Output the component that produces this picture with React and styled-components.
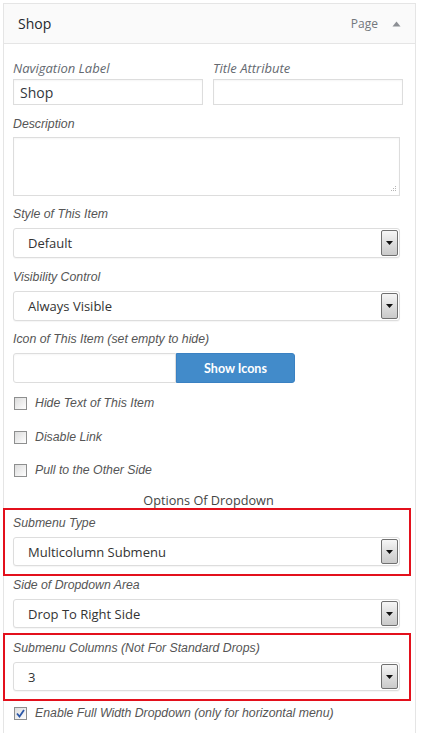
import React from 'react';
import styled, { createGlobalStyle } from 'styled-components';

const GlobalStyle = createGlobalStyle`
  html, body {
    margin: 0;
    padding: 0;
    background: #fff;
  }
  body {
    font-family: "Open Sans", "Liberation Sans", sans-serif;
    color: #333;
  }
`;

const Panel = styled.div`
  margin: 3px 0 0 3px;
  width: 411px;
  min-height: 730px;
  border: 1px solid #e5e5e5;
  border-bottom: none;
  background: #fff;
`;

const Header = styled.div`
  height: 39px;
  padding: 0 14px 0 14px;
  display: flex;
  align-items: center;
  background: #fafafa;
  border-bottom: 1px solid #e5e5e5;
`;

const Title = styled.div`
  flex: 1;
  font-size: 14px;
  font-weight: 400;
  color: #23282d;
`;

const ItemType = styled.span`
  font-size: 12px;
  color: #72777c;
  margin-right: 14px;
`;

const Toggle = () => (
  <svg width="9" height="6" viewBox="0 0 9 6">
    <path d="M0.5 5.5 L4.5 0.5 L8.5 5.5 Z" fill="#8c8f94" />
  </svg>
);

const Body = styled.div`
  padding: 15px 11px 0 9px;
  display: flex;
  flex-direction: column;
`;

const Row = styled.div`
  display: flex;
  gap: 10px;
`;

const Field = styled.div`
  display: flex;
  flex-direction: column;
  margin-top: ${p => p.$top || 0}px;
  width: ${p => (p.$width ? `${p.$width}px` : 'auto')};
`;

const Label = styled.label`
  display: block;
  height: 18px;
  line-height: 18px;
  font-style: italic;
  font-size: ${p => (p.$wp ? 13 : 12.3)}px;
  color: ${p => (p.$wp ? '#646970' : '#555')};
  font-family: ${p =>
    p.$wp ? '"Open Sans", sans-serif' : '"Liberation Sans", Arial, sans-serif'};
  margin-bottom: ${p => p.$gap || 5}px;
`;

const TextInput = styled.input`
  box-sizing: border-box;
  width: ${p => p.$width}px;
  height: ${p => p.$height || 26}px;
  border: 1px solid #ddd;
  border-radius: ${p => (p.$flat ? '3px 0 0 3px' : '0')};
  padding: 0 6px;
  font-family: "Open Sans", sans-serif;
  font-size: 14px;
  color: #32373c;
  box-shadow: inset 0 1px 2px rgba(0, 0, 0, 0.04);
  outline: none;
`;

const AreaWrap = styled.div`
  position: relative;
  width: 387px;
  height: 59px;
`;

const TextArea = styled.textarea`
  box-sizing: border-box;
  width: 387px;
  height: 59px;
  border: 1px solid #ddd;
  box-shadow: inset 0 1px 2px rgba(0, 0, 0, 0.04);
  outline: none;
  margin: 0;
  display: block;
  resize: none;
`;

const Grip = styled.svg`
  position: absolute;
  right: 3px;
  bottom: 3px;
`;

const SelectBox = styled.div`
  box-sizing: border-box;
  width: 387px;
  height: ${p => p.$height || 30}px;
  border: 1px solid #ddd;
  border-radius: 3px;
  padding: 0 1px 0 14px;
  display: flex;
  align-items: center;
  background: #fff;
  box-shadow: 0 1px 1px rgba(0, 0, 0, 0.04);
`;

const SelectText = styled.span`
  flex: 1;
  font-size: 13px;
  color: #333;
`;

const DropButton = styled.span`
  box-sizing: border-box;
  width: 17px;
  height: calc(100% - 2px);
  border: 1px solid #707070;
  border-radius: 2px;
  background: linear-gradient(#f6f6f6, #dedede 50%, #cacaca);
  display: flex;
  align-items: center;
  justify-content: center;
`;

const Select = ({ value, height }) => (
  <SelectBox $height={height}>
    <SelectText>{value}</SelectText>
    <DropButton>
      <svg width="7" height="4" viewBox="0 0 7 4">
        <path d="M0 0 H7 L3.5 4 Z" fill="#111" />
      </svg>
    </DropButton>
  </SelectBox>
);

const IconRow = styled.div`
  display: flex;
`;

const ShowButton = styled.button`
  box-sizing: border-box;
  width: 119px;
  height: 30px;
  border: 1px solid #3a81c2;
  border-radius: 0 3px 3px 0;
  background: #428bca;
  color: #fff;
  font-family: Lato, "Open Sans", sans-serif;
  font-weight: 700;
  font-size: 12.5px;
  padding: 0;
`;

const CheckRow = styled.div`
  display: flex;
  align-items: center;
  gap: 8px;
  height: 18px;
  margin-top: ${p => p.$top || 0}px;
  padding-left: 1px;
`;

const Box = styled.span`
  box-sizing: border-box;
  width: 13px;
  height: 13px;
  border: 1px solid #8e8f8f;
  background: linear-gradient(135deg, #dcdcdc, #f4f4f4 70%, #fff);
  display: flex;
  align-items: center;
  justify-content: center;
`;

const CheckText = styled.span`
  font-family: "Liberation Sans", Arial, sans-serif;
  font-style: italic;
  font-size: 12.3px;
  color: #555;
`;

const Check = ({ label, checked, top }) => (
  <CheckRow $top={top}>
    <Box>
      {checked && (
        <svg width="9" height="9" viewBox="0 0 9 9">
          <path d="M1 4.5 L3.5 7.5 L8 1" stroke="#2b57a8" strokeWidth="1.8" fill="none" />
        </svg>
      )}
    </Box>
    <CheckText>{label}</CheckText>
  </CheckRow>
);

const SectionTitle = styled.div`
  text-align: center;
  font-size: 12.7px;
  color: #444;
  height: 18px;
  line-height: 18px;
  margin-top: 12px;
`;

const Highlight = styled.div`
  box-sizing: border-box;
  width: 408px;
  margin-left: -10px;
  margin-top: ${p => p.$top || 0}px;
  border: 2px solid #e3101c;
  padding: 4px 9px 8px 8px;
`;

const App = () => (
  <>
    <GlobalStyle />
    <Panel>
      <Header>
        <Title>Shop</Title>
        <ItemType>Page</ItemType>
        <Toggle />
      </Header>
      <Body>
        <Row>
          <Field $width={190}>
            <Label $wp $gap={2}>Navigation Label</Label>
            <TextInput $width={190} defaultValue="Shop" />
          </Field>
          <Field $width={190}>
            <Label $wp $gap={2}>Title Attribute</Label>
            <TextInput $width={190} />
          </Field>
        </Row>
        <Field $top={10}>
          <Label $gap={4}>Description</Label>
          <AreaWrap>
            <TextArea />
            <Grip width="7" height="7" viewBox="0 0 7 7">
              <g fill="#b5b5b5">
                <rect x="5" y="0" width="1" height="1" />
                <rect x="3" y="2" width="1" height="1" />
                <rect x="5" y="2" width="1" height="1" />
                <rect x="1" y="4" width="1" height="1" />
                <rect x="3" y="4" width="1" height="1" />
                <rect x="5" y="4" width="1" height="1" />
              </g>
            </Grip>
          </AreaWrap>
        </Field>
        <Field $top={9}>
          <Label>Style of This Item</Label>
          <Select value="Default" />
        </Field>
        <Field $top={10}>
          <Label>Visibility Control</Label>
          <Select value="Always Visible" />
        </Field>
        <Field $top={9}>
          <Label>Icon of This Item (set empty to hide)</Label>
          <IconRow>
            <TextInput $width={163} $height={30} $flat />
            <ShowButton>Show Icons</ShowButton>
          </IconRow>
        </Field>
        <Check label="Hide Text of This Item" top={11} />
        <Check label="Disable Link" top={16} />
        <Check label="Pull to the Other Side" top={15} />
        <SectionTitle>Options Of Dropdown</SectionTitle>
        <Highlight $top={-1}>
          <Label>Submenu Type</Label>
          <Select value="Multicolumn Submenu" height={29} />
        </Highlight>
        <Field $top={0}>
          <Label>Side of Dropdown Area</Label>
          <Select value="Drop To Right Side" height={29} />
        </Field>
        <Highlight $top={5}>
          <Label>Submenu Columns (Not For Standard Drops)</Label>
          <Select value="3" height={29} />
        </Highlight>
        <Check label="Enable Full Width Dropdown (only for horizontal menu)" checked top={3} />
      </Body>
    </Panel>
  </>
);

export default App;
